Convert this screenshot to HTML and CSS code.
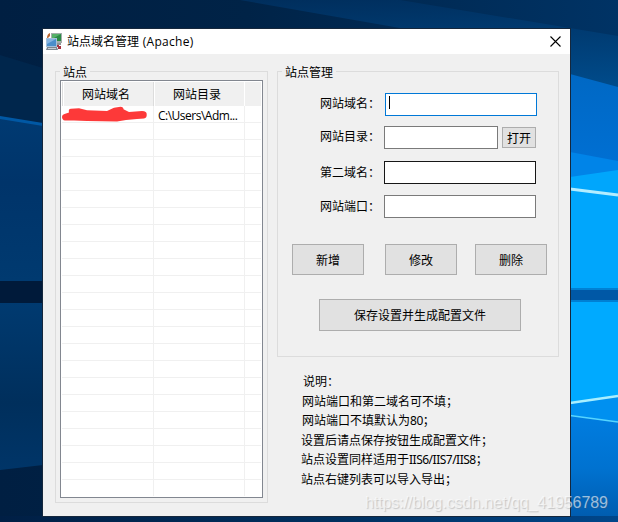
FILE: index.html
```html
<!DOCTYPE html>
<html lang="zh-CN">
<head>
<meta charset="utf-8">
<title>站点域名管理 (Apache)</title>
<link rel="stylesheet" href="styles.css">
</head>
<body>
<div class="desktop">
  <svg class="wallpaper" viewBox="0 0 618 522" aria-hidden="true">
    <defs>
      <linearGradient id="sky" x1="0" y1="0" x2="1" y2="0"><stop offset="0" stop-color="#001f42"/><stop offset=".4" stop-color="#002347"/><stop offset="1" stop-color="#003365"/></linearGradient>
      <linearGradient id="left" x1="0" y1="0" x2="0" y2="1"><stop offset="0" stop-color="#003a72"/><stop offset=".4" stop-color="#00346a"/><stop offset="1" stop-color="#003a70"/></linearGradient>
      <linearGradient id="left2" x1="0" y1="0" x2="0" y2="1"><stop offset="0" stop-color="#003a70"/><stop offset=".6" stop-color="#002f5c"/><stop offset="1" stop-color="#003568"/></linearGradient>
      <linearGradient id="topright" x1="0" y1="0" x2="0" y2="1"><stop offset="0" stop-color="#003264"/><stop offset="1" stop-color="#00559a"/></linearGradient>
      <linearGradient id="blue" x1="0" y1="0" x2="0" y2="1"><stop offset="0" stop-color="#0068c4"/><stop offset="1" stop-color="#0070d4"/></linearGradient>
      <linearGradient id="low" x1="0" y1="0" x2="0" y2="1"><stop offset="0" stop-color="#007de0"/><stop offset=".5" stop-color="#0072d0"/><stop offset="1" stop-color="#005aac"/></linearGradient>
      <linearGradient id="floor" x1="0" y1="0" x2="1" y2="0"><stop offset="0" stop-color="#001f45"/><stop offset=".55" stop-color="#00305f"/><stop offset="1" stop-color="#00468a"/></linearGradient>
    </defs>
    <rect width="618" height="522" fill="url(#sky)"/>
    <path d="M240 0 L400 0 L618 36 V90 H571 V28 H400Z" fill="url(#topright)" opacity=".75"/>
    <path d="M0 55L43 68V124L0 117Z" fill="#00264c"/>
    <path d="M0 117L43 124V281H0Z" fill="url(#left)"/>
    <path d="M0 116L43 123V126L0 119Z" fill="#0058a4"/>
    <path d="M0 281H43V303H0Z" fill="#001a3a"/>
    <path d="M0 303H43V465L0 470Z" fill="url(#left2)"/>
    <path d="M570 74L618 87V170L570 153Z" fill="url(#blue)"/>
    <path d="M570 152L618 161V180H570Z" fill="#0084e8"/>
    <path d="M570 177L618 170V290H570Z" fill="#00a6fc"/>
    <path d="M570 189L618 195" stroke="#b3edff" stroke-width="3"/>
    <path d="M570 288H618V302H570Z" fill="#0080d4"/>
    <path d="M570 290H618V300H570Z" fill="#0058a6"/>
    <path d="M570 302H618V398L570 404Z" fill="#00aaff"/>
    <path d="M570 403L618 396V424L570 416Z" fill="#0090f0"/>
    <path d="M570 415L618 422V522H570Z" fill="url(#low)"/>
    <path d="M570 403L618 396" stroke="#a8efff" stroke-width="2.5"/>
    <path d="M570 415.500L618 422" stroke="#55d5ff" stroke-width="1.500"/>
    <rect y="516" width="618" height="6" fill="url(#floor)"/>
  </svg>

  <main class="window">
    <header class="titlebar">
      <svg class="app-icon" viewBox="0 0 16 19" aria-hidden="true">
        <path d="M5 1h11v10H5z" fill="#a3adab"/><path d="M6 2h9v7H6z" fill="#2a8a45"/><path d="M6 2h9L6 7z" fill="#55b068"/>
        <path d="M1 6Q1 2 4 1L4 4L2 6Z" fill="#bb6730"/>
        <path d="M0 6h11v9H0z" fill="#a4c0da"/><path d="M1 7h9v7H1z" fill="#4a8ecb"/><path d="M1 7h9L1 12z" fill="#84b3e0"/>
        <path d="M1 15h10l1 3H0z" fill="#7d8790"/><path d="M2 16h8v1H2z" fill="#c5ced6"/>
        <path d="M11 11h4v2h-4z" fill="#8d9497"/><path d="M11 13h2v1h2v3h-3v-2h-1z" fill="#a43140"/>
      </svg>
      <h1 class="title">站点域名管理 <span class="latin">(Apache)</span></h1>
      <svg class="close" viewBox="0 0 11 11" aria-label="关闭"><path d="M.5 .5L10.500 10.500M10.500 .5L.5 10.500" stroke="#000" stroke-width="1.100"/></svg>
    </header>

    <div class="client">
      <fieldset class="group sites">
        <legend>站点</legend>
        <div class="list">
          <div class="list-head"><span>网站域名</span><span>网站目录</span><span></span></div>
          <div class="list-body">
            <div class="row">
              <span><svg class="scribble" viewBox="0 0 86 17" aria-hidden="true"><path d="M0 10.700Q0 8.500 2.500 8L7 6.500Q6 3 9 2.800L17 2.300L25 4.300L45 5L52 1.700L58.500.7Q61.500 .7 61.500 3.300L67 6L80 5Q85 5 84.700 8.500Q85 12 82 12.500L75 13L64 14L55 15.500L25 15L12 14.500L3 14.500Q0 14 0 10.700Z" fill="#fd3939"/></svg></span>
              <span class="path">C:\Users\Adm...</span><span></span>
            </div>
          </div>
        </div>
      </fieldset>

      <section class="side">
        <fieldset class="group manage">
          <legend>站点管理</legend>
          <div class="field first"><label>网站域名：</label><div class="input focused"><i class="caret"></i></div></div>
          <div class="field second"><label>网站目录：</label><div class="input short"></div><button class="open">打开</button></div>
          <div class="field third"><label>第二域名：</label><div class="input hovered"></div></div>
          <div class="field fourth"><label>网站端口：</label><div class="input"></div></div>
          <div class="actions"><button>新增</button><button>修改</button><button>删除</button></div>
          <button class="save">保存设置并生成配置文件</button>
        </fieldset>
        <div class="notes">
          <p class="lead">说明：</p>
          <p class="in">网站端口和第二域名可不填；</p>
          <p class="in">网站端口不填默认为<span class="num">80</span>；</p>
          <p>设置后请点保存按钮生成配置文件；</p>
          <p>站点设置同样适用于<span class="iis">IIS6/IIS7/IIS8</span>；</p>
          <p>站点右键列表可以导入导出；</p>
        </div>
      </section>
    </div>
  </main>
  <div class="watermark">https://blog.csdn.net/qq_41956789</div>
</div>
</body>
</html>
```
FILE: styles.css
```css
* { box-sizing: border-box; }
body { margin: 0; overflow: hidden; font: 12px/16px "Noto Sans CJK SC", sans-serif; color: #000; }
.desktop { position: relative; width: 618px; height: 522px; overflow: hidden; background: #00234a; }
.wallpaper { position: absolute; inset: 0; width: 618px; height: 522px; }
.window { position: absolute; left: 42px; top: 28px; width: 529px; height: 489px; border: 1px solid #15273c; background: #f0f0f0; }
.titlebar { display: flex; align-items: center; height: 25px; padding: 0 9px 0 3px; background: #fff; }
.app-icon { width: 16px; height: 19px; }
.title { margin: 0 auto 0 5px; font-size: 12px; font-weight: 400; line-height: 16px; white-space: pre; }
.latin { margin-left: 1px; font-family: "Open Sans", sans-serif; letter-spacing: .3px; }
.close { width: 11px; height: 11px; }
.client { display: flex; align-items: flex-start; padding: 17px 0 0 12px; }
.group { margin: 0; padding: 0; min-width: 0; border: 1px solid #dcdcdc; }
.group legend { height: 16px; margin-left: 4px; padding: 0 3px; line-height: 17px; }
.client .group { margin-top: -8px; }
.sites { width: 213px; height: 440px; }
.list { display: flex; flex-direction: column; width: 203px; height: 418px; margin: 1px 0 0 4px; padding: 1px; border: 1px solid #828790; background: #fff; }
.list-head { display: grid; grid-template-columns: 91px 91px 17px; height: 24px; background: #f0f0f0; text-align: center; line-height: 24px; }
.list-head span { padding-right: 4px; border-left: 1px solid #dcdcdc; box-shadow: inset 1px 0 #fff; }
.list-head span:last-child { border-color: #fff; box-shadow: none; }
.list-body { flex: 1; background:
  linear-gradient(#f0f0f0, #f0f0f0) 91px 0 / 1px 100% no-repeat,
  linear-gradient(#f0f0f0, #f0f0f0) 182px 0 / 1px 100% no-repeat,
  repeating-linear-gradient(#fff 0 16px, #f0f0f0 16px 17px); }
.row { display: grid; grid-template-columns: 91px 91px 17px; height: 17px; line-height: 19px; }
.scribble { display: block; width: 86px; height: 17px; }
.path { padding-left: 5px; font-family: "Open Sans", sans-serif; letter-spacing: -.5px; white-space: nowrap; }
.side { margin-left: 9px; }
.manage { width: 282px; height: 294px; }
.field { display: flex; height: 23px; margin-left: 42px; }
.field label { width: 64px; line-height: 20px; white-space: nowrap; }
.first { margin-top: 14px; }
.second { margin-top: 10px; }
.third { margin-top: 12px; }
.fourth { margin-top: 11px; }
.third label, .fourth label { line-height: 22px; }
.input { width: 152px; height: 23px; border: 1px solid #7a7a7a; background: #fff; }
.short { width: 114px; }
.focused { margin-left: 1px; padding: 2px 3px; border-color: #0078d7; }
.hovered { border-color: #171717; }
.caret { display: block; width: 1px; height: 13px; background: #000; }
button { padding: 0; border: 1px solid #adadad; background: #e1e1e1; color: #000; font: inherit; }
.open { width: 34px; height: 21px; margin: 1px 0 0 4px; }
.actions { display: grid; grid-template-columns: 72px 72px 72px; column-gap: 21px; margin: 26px 0 0 14px; }
.actions button { height: 31px; }
.actions button:last-child { margin-left: -3px; margin-right: 3px; }
.save { display: block; width: 202px; height: 32px; margin: 24px 0 0 41px; }
.notes { padding: 14px 0 0 24px; }
.notes p { margin: 0; height: 19.600px; line-height: 19px; white-space: nowrap; }
.notes .lead { padding-left: 2px; }
.notes .in { padding-left: 1px; }
.num, .iis { font-family: "Noto Sans", sans-serif; letter-spacing: -.5px; }
.watermark { position: absolute; left: 365px; top: 493px; font: 16px/20px "Liberation Sans", sans-serif; letter-spacing: -.08px; white-space: nowrap; color: rgba(255, 255, 255, .6); text-shadow: 1px 1px 1px rgba(90, 90, 90, .28); }
```
